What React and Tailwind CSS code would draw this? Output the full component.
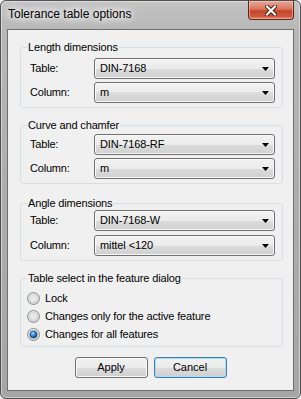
import React from "react";

const font = "font-['Liberation_Sans',Arial,sans-serif]";

function Arrow() {
  return (
    <svg width="7" height="4" viewBox="0 0 7 4" className="shrink-0">
      <path d="M0 0H7L3.5 4Z" fill="#000" />
    </svg>
  );
}

function Select({ value }) {
  return (
    <div className="flex h-[21px] w-[181px] items-center justify-between rounded-[3px] border border-[#707070] bg-[linear-gradient(to_bottom,#f2f2f2_0%,#ebebeb_50%,#dddddd_50%,#cfcfcf_100%)] pl-[5px] pr-[5px] shadow-[inset_0_0_0_1px_#f8f8f8]">
      <span className="text-[11px] leading-[13px] tracking-[-0.1px] text-black">{value}</span>
      <Arrow />
    </div>
  );
}

function Row({ label, value }) {
  return (
    <div className="flex items-center">
      <span className="w-[64px] text-[11px] leading-[13px] tracking-[-0.2px] text-black">{label}</span>
      <Select value={value} />
    </div>
  );
}

function Group({ title, className, children }) {
  return (
    <fieldset className={"ml-[12px] w-[263px] rounded-[3px] border border-[#d5dfe5] p-0 " + className}>
      <legend className="ml-[6px] px-[1px] text-[11px] leading-[14px] tracking-[-0.15px] text-black">{title}</legend>
      {children}
    </fieldset>
  );
}

function Radio({ checked, label }) {
  return (
    <div className="flex h-[17px] items-center gap-[5px]">
      <svg width="13" height="13" viewBox="0 0 13 13" className="shrink-0">
        <defs>
          <radialGradient id="rg" cx="50%" cy="40%" r="60%">
            <stop offset="0%" stopColor="#ffffff" />
            <stop offset="100%" stopColor="#cfcfcf" />
          </radialGradient>
          <radialGradient id="rb" cx="40%" cy="35%" r="65%">
            <stop offset="0%" stopColor="#a9dbff" />
            <stop offset="45%" stopColor="#3f8fd8" />
            <stop offset="100%" stopColor="#0e3c72" />
          </radialGradient>
        </defs>
        <circle cx="6.5" cy="6.5" r="6" fill="url(#rg)" stroke="#8e8f8f" strokeWidth="1" />
        <circle cx="6.5" cy="6.5" r="4" fill="#e9e9e9" stroke="#c9c9c9" strokeWidth="0.8" />
        {checked && <circle cx="6.5" cy="6.5" r="3.6" fill="url(#rb)" stroke="#16467f" strokeWidth="0.6" />}
      </svg>
      <span className="text-[11px] leading-[13px] tracking-[-0.15px] text-black">{label}</span>
    </div>
  );
}

function Button({ label, focused }) {
  return (
    <div
      className={
        "flex h-[21px] w-[73px] items-center justify-center rounded-[3px] border bg-[linear-gradient(to_bottom,#f2f2f2_0%,#ebebeb_50%,#dddddd_50%,#cfcfcf_100%)] text-[11px] leading-[13px] text-black " +
        (focused
          ? "border-[#3c7fb1] shadow-[inset_0_0_0_1px_#a8dcf6]"
          : "border-[#707070] shadow-[inset_0_0_0_1px_#fbfbfb]")
      }
    >
      {label}
    </div>
  );
}

export default function App() {
  return (
    <div className={"w-[301px] h-[399px] bg-[#f0f0f0] " + font}>
      <div className="flex h-[399px] w-[301px] flex-col rounded-[6px] border border-[#4f4f4f] bg-[linear-gradient(to_bottom,#c4c4c4_0px,#b7b7b7_28px,#adadad_200px,#a6a6a6_100%)] px-[6px] pb-[7px] shadow-[inset_0_0_0_1px_rgba(255,255,255,0.45)]">
        <div className="flex h-[28px] items-start justify-between">
          <span className="mt-[6px] pl-[1px] text-[12px] leading-[15px] text-black [text-shadow:0_0_6px_#fff,0_0_10px_#fff,0_0_14px_#fff]">
            Tolerance table options
          </span>
          <div className="flex h-[19px] w-[46px] items-center justify-center rounded-b-[4px] border border-t-0 border-[#5b2419] bg-[linear-gradient(to_bottom,#e8a898_0%,#d9755c_45%,#c5452c_55%,#d0593b_85%,#e0876a_100%)] shadow-[inset_0_0_0_1px_rgba(255,220,210,0.45)]">
            <svg width="12" height="11" viewBox="0 0 12 11">
              <path d="M2 1.5L10 9.5M10 1.5L2 9.5" stroke="#3b1810" strokeWidth="4" strokeLinecap="square" />
              <path d="M2 1.5L10 9.5M10 1.5L2 9.5" stroke="#ffffff" strokeWidth="2.2" strokeLinecap="square" />
            </svg>
          </div>
        </div>
        <div className="flex flex-1 flex-col border border-[#6f6f6f] bg-[#f0f0f0]">
          <Group title="Length dimensions" className="mt-[10px]">
            <div className="flex flex-col gap-[3px] pb-[4px] pl-[9px] pr-[7px] pt-[4px]">
              <Row label="Table:" value="DIN-7168" />
              <Row label="Column:" value="m" />
            </div>
          </Group>
          <Group title="Curve and chamfer" className="mt-[10px]">
            <div className="flex flex-col gap-[3px] pb-[4px] pl-[9px] pr-[7px] pt-[2px]">
              <Row label="Table:" value="DIN-7168-RF" />
              <Row label="Column:" value="m" />
            </div>
          </Group>
          <Group title="Angle dimensions" className="mt-[12px]">
            <div className="flex flex-col gap-[4px] pb-[4px] pl-[9px] pr-[7px] pt-[0px]">
              <Row label="Table:" value="DIN-7168-W" />
              <Row label="Column:" value="mittel <120" />
            </div>
          </Group>
          <Group title="Table select in the feature dialog" className="mt-[10px]">
            <div className="flex flex-col gap-[1px] pb-[3px] pl-[6px] pt-[5px]">
              <Radio label="Lock" />
              <Radio label="Changes only for the active feature" />
              <Radio checked label="Changes for all features" />
            </div>
          </Group>
          <div className="mt-[10px] flex justify-center gap-[6px]">
            <Button label="Apply" />
            <Button label="Cancel" focused />
          </div>
        </div>
      </div>
    </div>
  );
}
